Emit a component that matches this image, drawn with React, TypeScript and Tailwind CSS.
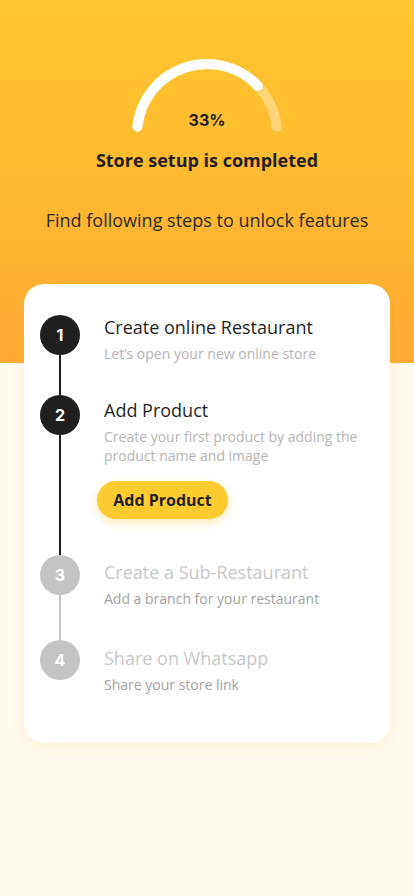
const STEPS = [
  {
    n: 1,
    title: 'Create online Restaurant',
    text: 'Let’s open your new online store',
    done: true,
    height: 'h-[80px]',
    offset: 'pt-0',
  },
  {
    n: 2,
    title: 'Add Product',
    text: 'Create your first product by adding the product name and image',
    done: true,
    action: 'Add Product',
    height: 'h-[160px]',
    offset: 'pt-[3px]',
  },
  {
    n: 3,
    title: 'Create a Sub-Restaurant',
    text: 'Add a branch for your restaurant',
    done: false,
    height: 'h-[85px]',
    offset: 'pt-[5px]',
  },
  {
    n: 4,
    title: 'Share on Whatsapp',
    text: 'Share your store link',
    done: false,
    height: 'h-[88px]',
    offset: 'pt-[6px]',
  },
];

const ProgressArc = () => (
  <div className="relative mx-auto h-[82px] w-[160px]">
    <svg width="160" height="82" viewBox="0 0 160 82" fill="none">
      <path
        d="M 10.4 72.7 A 70 70 0 0 1 149.6 72.7"
        stroke="white"
        strokeOpacity="0.35"
        strokeWidth="10"
        strokeLinecap="round"
      />
      <path d="M 10.4 72.7 A 70 70 0 0 1 130.7 31.7" stroke="white" strokeWidth="10" strokeLinecap="round" />
    </svg>
    <span className="absolute left-0 right-0 top-[54px] text-center font-['Inter',sans-serif] text-[16px] font-bold text-[#1f1f1f]">
      33%
    </span>
  </div>
);

export default function App() {
  return (
    <div className="min-h-[896px] w-full bg-[#fffbf1] font-['Open_Sans',sans-serif]">
      <div className="h-[363px] bg-gradient-to-b from-[#ffc72e] to-[#ffab33] pt-[54px]">
        <ProgressArc />
        <p className="mt-[12px] text-center text-[18px] font-bold leading-6 text-[#1f1f1f]">Store setup is completed</p>
        <p className="mt-[36px] text-center text-[18px] leading-6 text-[#2a2a2a]">Find following steps to unlock features</p>
      </div>

      <div className="mx-[24px] -mt-[79px] rounded-[20px] bg-white pl-[16px] pr-4 pt-[31px] pb-[15px] shadow-[0_4px_18px_rgba(255,196,60,0.18)]">
        {STEPS.map((step, i) => {
          const last = i === STEPS.length - 1;
          const lineColor = step.done ? 'bg-[#1f1f1f]' : 'bg-[#c4c4c4]';
          return (
            <div key={step.n} className={`flex ${step.height}`}>
              <div className="flex w-10 flex-col items-center">
                <div
                  className={`flex h-10 w-10 shrink-0 items-center justify-center rounded-full font-['Inter',sans-serif] text-[16px] font-bold text-white ${
                    step.done ? 'bg-[#1f1f1f]' : 'bg-[#c4c4c4]'
                  }`}
                >
                  {step.n}
                </div>
                {!last ? <div className={`w-[2px] flex-1 ${lineColor}`} /> : null}
              </div>
              <div className={`ml-6 ${step.offset}`}>
                <p className={`text-[18px] leading-6 ${step.done ? 'text-[#1f1f1f]' : 'text-[#c8c8c8]'}`}>{step.title}</p>
                <p className={`mt-[5px] text-[14px] leading-[19px] ${step.done ? 'text-[#b5b5b5]' : 'text-[#a3a3a3]'}`}>
                  {step.text}
                </p>
                {step.action ? (
                  <button
                    type="button"
                    className="-ml-[7px] mt-[16px] h-[38px] w-[131px] rounded-full bg-[#ffcb2f] text-[16px] font-bold text-[#1f1f1f] shadow-[0_4px_10px_rgba(255,190,40,0.35)]"
                  >
                    {step.action}
                  </button>
                ) : null}
              </div>
            </div>
          );
        })}
      </div>
    </div>
  );
}
